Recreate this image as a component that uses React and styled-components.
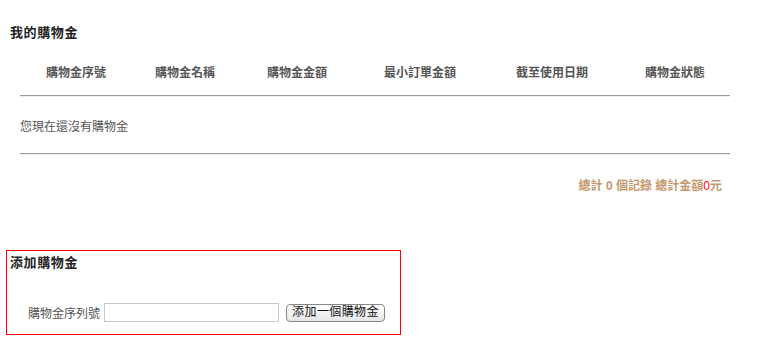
import styled, { createGlobalStyle } from "styled-components"

const GlobalStyle = createGlobalStyle`
  html, body {
    margin: 0;
    padding: 0;
    background: #fff;
  }
  body {
    font-family: "Liberation Sans", "Noto Sans CJK TC", Arial, sans-serif;
    color: #333;
  }
`

const columns = [
  { title: "購物金序號", width: 112 },
  { title: "購物金名稱", width: 106 },
  { title: "購物金金額", width: 118 },
  { title: "最小訂單金額", width: 128 },
  { title: "截至使用日期", width: 136 },
  { title: "購物金狀態", width: 110 },
]

export default function App() {
  return (
    <Page>
      <GlobalStyle />
      <Section>
        <Title>我的購物金</Title>
        <Table>
          <HeadRow>
            {columns.map((c) => (
              <HeadCell key={c.title} $w={c.width}>{c.title}</HeadCell>
            ))}
          </HeadRow>
          <Divider />
          <EmptyRow>您現在還沒有購物金</EmptyRow>
          <Divider />
        </Table>
        <Summary>
          總計 <b>0</b> 個記錄 總計金額<Red>0</Red>元
        </Summary>
      </Section>

      <AddBox>
        <Title>添加購物金</Title>
        <Form>
          <Label>購物金序列號</Label>
          <Input type="text" />
          <Button type="button">添加一個購物金</Button>
        </Form>
      </AddBox>
    </Page>
  )
}

const Page = styled.div`
  width: 766px;
  height: 361px;
  padding: 25px 0 0 0;
  box-sizing: border-box;
`
const Section = styled.section`
  padding: 0 10px;
`
const Title = styled.h2`
  margin: 0;
  font-size: 13px;
  letter-spacing: 0.6px;
  font-weight: 700;
  line-height: 16px;
  color: #222;
`
const Table = styled.div`
  margin: 25px 26px 0 10px;
`
const HeadRow = styled.div`
  display: flex;
  height: 29px;
  align-items: flex-start;
`
const HeadCell = styled.div`
  width: ${(p) => p.$w}px;
  text-align: center;
  font-size: 12px;
  font-weight: 700;
  color: #555;
  line-height: 14px;
`
const Divider = styled.div`
  height: 0;
  border-top: 1px solid #999;
  border-bottom: 1px solid #eee;
`
const EmptyRow = styled.div`
  height: 56px;
  display: flex;
  align-items: center;
  font-size: 12px;
  color: #555;
`
const Summary = styled.div`
  margin: 24px 34px 0 0;
  text-align: right;
  font-size: 12px;
  font-weight: 700;
  color: #c4986c;
  line-height: 14px;
`
const Red = styled.span`
  color: #ff0000;
  font-weight: 400;
`
const AddBox = styled.section`
  margin: 57px 0 0 6px;
  width: 395px;
  height: 85px;
  border: 1px solid #ff0000;
  padding: 4px 3px 0 3px;
  box-sizing: border-box;
`
const Form = styled.div`
  display: flex;
  align-items: center;
  margin-top: 32px;
  padding-left: 18px;
`
const Label = styled.span`
  font-size: 12px;
  color: #555;
  margin-right: 4px;
`
const Input = styled.input`
  width: 175px;
  height: 19px;
  box-sizing: border-box;
  border: 1px solid #c8c8c8;
  margin: 0 7px 0 0;
  padding: 0 3px;
`
const Button = styled.button`
  height: 18px;
  width: 99px;
  padding: 0;
  font-family: inherit;
  font-size: 12px;
  letter-spacing: 0.4px;
  line-height: 15px;
  color: #111;
  background: linear-gradient(#fff, #e6e6e6);
  border: 1px solid #888;
  border-radius: 4px;
`
